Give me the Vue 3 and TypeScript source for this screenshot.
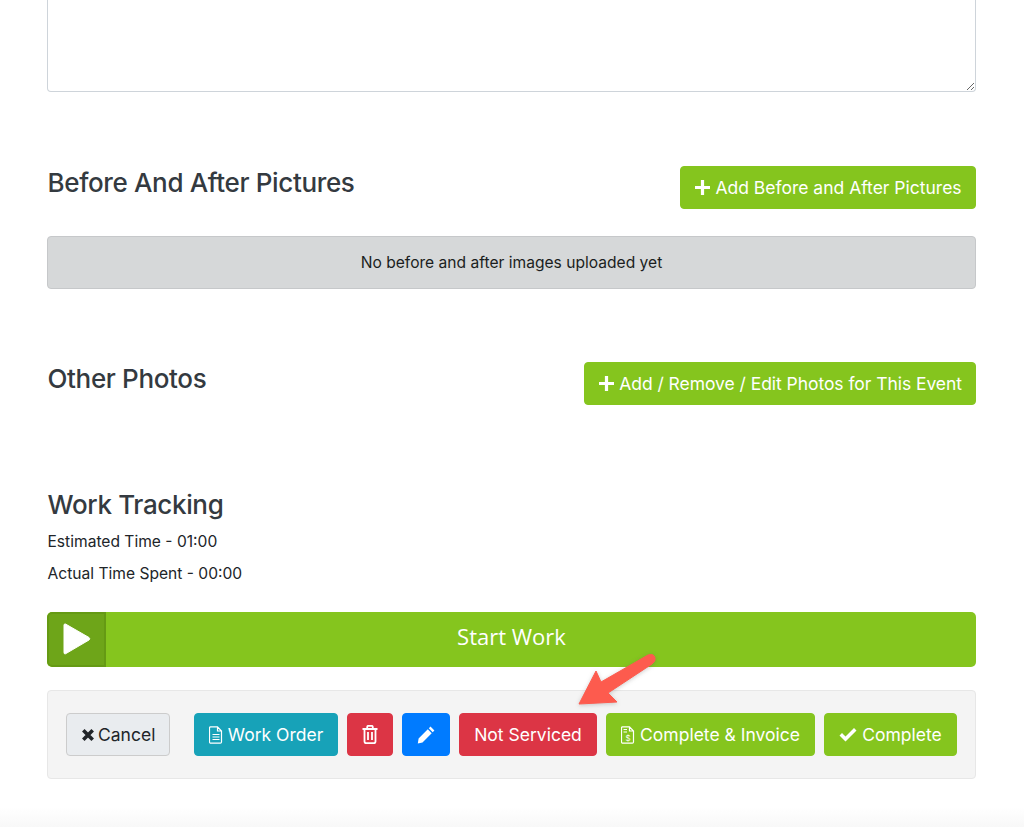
<script setup lang="ts">
const green = 'btn-green'
</script>

<template>
  <div class="page">
    <textarea class="notes" aria-label="Notes"></textarea>

    <section class="row first">
      <h2>Before And After Pictures</h2>
      <button :class="['btn', green, 'before']">
        <svg class="ico" viewBox="1 1 14 14"><path d="M6.500 1h3v5.500H15v3H9.500V15h-3V9.500H1v-3h5.500z" fill="currentColor" /></svg>
        Add Before and After Pictures
      </button>
    </section>
    <div class="alert">No before and after images uploaded yet</div>

    <section class="row second">
      <h2>Other Photos</h2>
      <button :class="['btn', green, 'tight']">
        <svg class="ico" viewBox="1 1 14 14"><path d="M6.500 1h3v5.500H15v3H9.500V15h-3V9.500H1v-3h5.500z" fill="currentColor" /></svg>
        Add / Remove / Edit Photos for This Event
      </button>
    </section>

    <section class="tracking">
      <h2>Work Tracking</h2>
      <p class="line">Estimated Time - 01:00</p>
      <p class="line">Actual Time Spent - 00:00</p>
    </section>

    <div class="start">
      <span class="handle">
        <svg viewBox="0 0 28 32" width="28" height="32"><path d="M2.500 1 L26 14.500 Q27.500 15.800 26 17 L2.500 30.800 Q1 31.300 1 29.500 V2.300 Q1 .5 2.500 1z" fill="#fff" stroke="#fff" stroke-width="1" stroke-linejoin="round" /></svg>
      </span>
      <span class="start-label">Start Work</span>
    </div>

    <div class="panel">
      <button class="btn btn-light">
        <svg class="ico small" viewBox="0 0 14 14"><path d="M2.300 2.300 11.700 11.700M11.700 2.300 2.300 11.700" fill="none" stroke="currentColor" stroke-width="3.600" /></svg>
        Cancel
      </button>
      <div class="actions">
        <button class="btn btn-teal">
          <svg class="ico doc" viewBox="0 0 14 18" fill="none" stroke="currentColor" stroke-width="1.200"><path d="M1.500.8h7l4 4.200v11a1.200 1.200 0 0 1-1.200 1.200H1.700A1.200 1.200 0 0 1 .5 16V2A1.200 1.200 0 0 1 1.500.8zM8.500.8V5h4M3.500 8.500h7M3.500 11h7M3.500 13.500h7" /></svg>
          Work Order
        </button>
        <button class="btn btn-red icon-only trash" aria-label="Delete">
          <svg viewBox="0 0 16 19" width="16" height="19" fill="none" stroke="currentColor" stroke-width="1.800"><path d="M.5 4h15M2.500 4v12.500a1.700 1.700 0 0 0 1.700 1.700h7.600a1.700 1.700 0 0 0 1.700-1.700V4M5.200 4V2a1.200 1.200 0 0 1 1.200-1.200h3.200A1.200 1.200 0 0 1 10.800 2v2M6 7v8M10 7v8" /></svg>
        </button>
        <button class="btn btn-blue icon-only pencil" aria-label="Edit">
          <svg viewBox="0 0 18 18" width="18" height="18"><path d="M13.500.6 17.400 4.500 15.700 6.200 11.800 2.300zM10.800 3.300 14.700 7.200 5.500 16.400.8 17.400 1.600 12.500z" fill="currentColor" /></svg>
        </button>
        <button class="btn btn-red wide">Not Serviced</button>
        <button :class="['btn', green, 'invoice']">
          <svg class="ico doc" viewBox="0 0 14 18" fill="none" stroke="currentColor" stroke-width="1.200"><path d="M1.500.8h7l4 4.200v11a1.200 1.200 0 0 1-1.200 1.200H1.700A1.200 1.200 0 0 1 .5 16V2A1.200 1.200 0 0 1 1.500.8zM8.500.8V5h4M2.500 3.500h3.500M2.500 6h3.500" /><text x="7" y="14.500" text-anchor="middle" font-size="8" fill="currentColor" stroke="none" font-family="Inter, sans-serif">$</text></svg>
          Complete &amp; Invoice
        </button>
        <button :class="['btn', green, 'done']">
          <svg class="ico check" viewBox="0 0 18 14"><path d="M.5 7.500 3 5l3.500 3.500L15 0l2.500 2.500L6.500 13.500z" fill="currentColor" /></svg>
          Complete
        </button>
      </div>
    </div>

    <svg class="arrow" viewBox="0 0 100 70" width="100" height="70" aria-hidden="true">
      <path d="M5 52 L22 19 L27 30 L74 3 Q80 1 81 6 Q82 9 78 12 L34 41 L43 50 Z" fill="#fd5b4e" stroke="#fd5b4e" stroke-width="1" stroke-linejoin="round" />
    </svg>
    <div class="fade"></div>
  </div>
</template>

<style scoped>
.page {
  position: relative;
  box-sizing: border-box;
  width: 1024px;
  height: 827px;
  padding: 0 48px 0 47px;
  overflow: hidden;
  background: #fff;
  font-family: Inter, "Liberation Sans", sans-serif;
  color: #212529;
}
.notes {
  display: block;
  box-sizing: border-box;
  width: 100%;
  height: 92px;
  border: 1px solid #ced4da;
  border-top: 0;
  border-radius: 0 0 4px 4px;
  background: #fff;
  outline: 0;
}
h2 {
  margin: 0;
  padding: 1px 0 0 0.5px;
  font-size: 26px;
  font-weight: 500;
  line-height: 32px;
  letter-spacing: -0.35px;
  color: #343a40;
}
.row {
  display: flex;
  justify-content: space-between;
  align-items: flex-start;
}
.row .btn { padding-right: 13px; }
.row.first { margin-top: 74px; }
.row.second { margin-top: 73px; }
.alert {
  box-sizing: border-box;
  height: 53px;
  margin-top: 27px;
  border: 1px solid #c6c8ca;
  border-radius: 4px;
  background: #d6d8d9;
  color: #1b1e21;
  font-size: 15.600px;
  line-height: 52px;
  text-align: center;
}
.btn {
  display: inline-flex;
  align-items: center;
  justify-content: center;
  gap: 5px;
  box-sizing: border-box;
  height: 43px;
  padding: 0 14px;
  border: 1px solid transparent;
  border-radius: 4px;
  font-family: inherit;
  font-size: 17.500px;
  white-space: nowrap;
  color: #fff;
}
.tight { letter-spacing: -0.05px; }
.btn-green { background: #85c51e; border-color: #85c51e; }
.btn-teal { background: #17a2b8; border-color: #17a2b8; width: 144px; }
.btn-red { background: #dc3545; border-color: #dc3545; }
.btn-blue { background: #007bff; border-color: #007bff; }
.btn-light { background: #e9ecef; border-color: #ccc; color: #212529; gap: 3px; }
.ico { width: 15px; height: 15px; flex: none; }
.ico.small { width: 14px; height: 14px; }
.ico.doc { width: 14px; height: 18px; }
.ico.check { width: 18px; height: 14px; }
.icon-only { padding: 0; }
.trash { width: 46px; }
.pencil { width: 48px; }
.wide { width: 138px; }
.before { width: 296px; }
.invoice { width: 209px; }
.done { width: 133px; }
.tracking { margin-top: 83px; }
.tracking h2 { margin-bottom: 9px; }
.line {
  margin: 0 0 8px;
  padding-left: 0.5px;
  font-size: 15.600px;
  line-height: 24px;
}
.start {
  position: relative;
  display: flex;
  align-items: center;
  justify-content: center;
  box-sizing: border-box;
  height: 55px;
  margin-top: 26px;
  padding-bottom: 8px;
  border-radius: 5px;
  background: #85c51e;
  overflow: hidden;
}
.handle {
  position: absolute;
  left: 0;
  top: 0;
  bottom: 0;
  display: flex;
  align-items: center;
  justify-content: center;
  box-sizing: border-box;
  width: 59px;
  padding-bottom: 2px;
  border: 2px solid #659a14;
  border-radius: 5px 0 0 5px;
  background: #6ea519;
}
.start-label {
  font-family: "Open Sans", sans-serif;
  font-size: 22px;
  color: #fff;
}
.panel {
  display: flex;
  justify-content: space-between;
  align-items: center;
  box-sizing: border-box;
  height: 89px;
  margin-top: 23px;
  padding: 0 18px;
  border: 1px solid #e7e7e7;
  border-radius: 4px;
  background: #f4f4f4;
}
.actions {
  display: flex;
  gap: 9px;
}
.arrow {
  position: absolute;
  left: 574px;
  top: 652px;
  filter: drop-shadow(0 1px 2px rgba(90, 90, 90, 0.3));
}
.fade {
  position: absolute;
  left: 0;
  right: 0;
  bottom: 0;
  height: 20px;
  background: linear-gradient(#fff, #f8f8f8);
  pointer-events: none;
}
</style>
